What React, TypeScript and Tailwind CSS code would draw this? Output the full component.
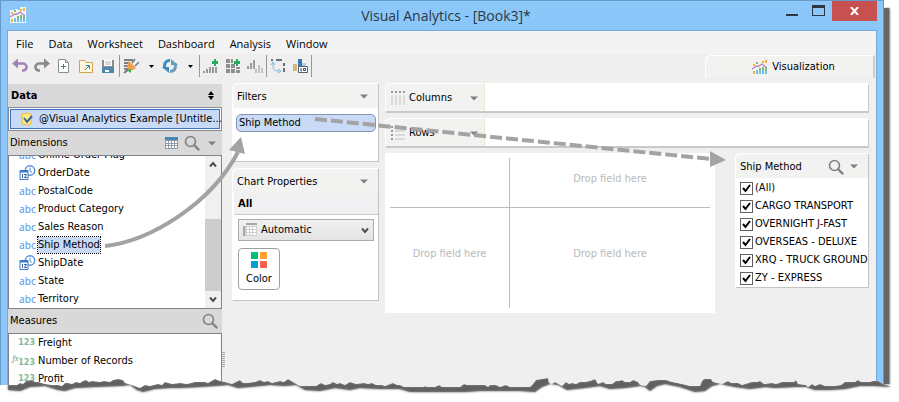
import type { ReactNode } from "react";

const MENUS = ["File", "Data", "Worksheet", "Dashboard", "Analysis", "Window"];

const DIMENSIONS = [
  { label: "Online Order Flag", type: "text" },
  { label: "OrderDate", type: "date" },
  { label: "PostalCode", type: "text" },
  { label: "Product Category", type: "text" },
  { label: "Sales Reason", type: "text" },
  { label: "Ship Method", type: "text", selected: true },
  { label: "ShipDate", type: "date" },
  { label: "State", type: "text" },
  { label: "Territory", type: "text" },
];

const MEASURES = [
  { label: "Freight", calculated: false },
  { label: "Number of Records", calculated: true },
  { label: "Profit", calculated: false },
];

const SHIP_METHODS = [
  "(All)",
  "CARGO TRANSPORT",
  "OVERNIGHT J-FAST",
  "OVERSEAS - DELUXE",
  "XRQ - TRUCK GROUND",
  "ZY - EXPRESS",
];

// Jagged upper edge and smoother lower edge of the torn strip
const TEAR_TOP =
  "0,385 8,385 17,385 20,383 23,384 26,381 32,380 35,382 38,382 45,384 52,385 58,385 62,386 65,383 68,383 72,384 76,382 80,383 83,381 86,380 89,382 92,381 100,382 104,381 110,382 113,380 118,379 123,380 125,383 132,385 140,388 145,385 150,386 158,384 162,385 165,382 172,384 180,383 187,384 195,382 205,382 208,383 215,379 220,381 225,382 232,384 236,382 240,380 243,383 247,383 255,382 260,380 264,382 268,381 272,383 280,381 284,382 288,379 293,382 298,385 300,386 310,386 316,386 321,383 325,385 330,384 333,382 337,384 340,383 345,385 350,382 353,383 356,384 364,383 368,384 372,383 376,385 382,385 385,386 393,383 397,385 400,385 404,387 424,387 425,386 427,387 435,387 439,385 442,387 460,387 464,384 467,385 485,385 488,387 490,385 496,385 500,387 506,385 510,387 530,387 533,384 536,380 542,379 548,378 549,383 552,384 555,382 562,386 566,382 569,384 572,383 576,384 580,382 585,382 590,381 595,379 598,384 603,382 606,384 612,384 616,381 619,381 622,380 625,382 630,382 633,380 638,382 640,385 646,386 650,381 658,380 666,380 672,382 682,384 690,386 700,386 702,381 704,379 711,379 713,382 722,384 728,381 731,383 738,383 742,385 752,382 757,382 760,381 764,384 772,383 776,384 782,382 794,382 796,380 798,384 806,385 808,387 812,384 815,386 820,384 825,386 835,386 841,385 845,382 855,382 858,380 861,382 870,382 873,381 878,381 883,384 899,385".split(
    " ",
  );
const TEAR_BOTTOM =
  "891,387 875,386 860,386 845,389 830,390 815,390 806,387 795,387 775,388 765,387 750,389 735,387 720,384 712,386 705,391 695,392 680,387 665,384 657,386 650,391 645,387 640,386 625,388 610,389 600,386 585,388 567,390 558,385 550,384 542,387 535,392 520,391 500,391 480,391 465,392 435,392 410,392 400,389 380,389 360,388 350,390 335,388 320,391 305,390 296,385 285,386 270,385 250,387 238,388 228,385 215,386 200,387 180,388 170,388 155,389 143,392 137,390 130,385 120,386 95,387 75,388 65,391 58,390 45,386 30,387 20,391 8,390";

function ChartIcon({ className, halo }: { className?: string; halo?: boolean }) {
  return (
    <svg viewBox="0 0 16 16" className={className} aria-hidden="true">
      {halo && <path d="M0 3h5V2h3v1h2V0h6v16H0z" fill="#fff" opacity=".85" />}
      <path d="M1 5h2v2H1zM10 2h2v2h-2zM13 1h2v3h-2zM1 12h2v3H1z" fill="#fbb034" />
      <path d="M4 3h2v2H4zM7 9h2v3H7zM10 8h2v3h-2zM13 9h2v3h-2z" fill="#7dbb7d" />
      <path d="M4 11h2v4H4zM7 12h2v3H7zM10 11h2v4h-2zM13 12h2v3h-2z" fill="#6cc0ec" />
      <path d="M0 10 4 7.5 7 7l3-2 5 4" fill="none" stroke="#b982b6" strokeWidth="1.4" />
    </svg>
  );
}

function SearchIcon() {
  return (
    <svg viewBox="0 0 16 16" className="h-4 w-4" fill="none" stroke="#818181" aria-hidden="true">
      <circle cx="6.5" cy="6.5" r="5" strokeWidth="1.6" />
      <path d="m10.5 10.5 4 4" strokeWidth="2.4" strokeLinecap="round" />
    </svg>
  );
}

function Caret() {
  return (
    <svg viewBox="0 0 8 5" className="h-[5px] w-2 fill-[#808080]" aria-hidden="true">
      <path d="M0 .5h8L4 4.5z" />
    </svg>
  );
}

function CaretButton({ label }: { label: string }) {
  return (
    <button type="button" aria-label={label} className="flex h-4 w-3 items-center justify-center">
      <Caret />
    </button>
  );
}

function Chevron({ up }: { up?: boolean }) {
  return (
    <svg viewBox="0 0 8 7" className="h-[7px] w-2" fill="none" stroke="#505050" strokeWidth="2" aria-hidden="true">
      <path d={up ? "M1 5.5 4 2l3 3.5" : "M1 1.5 4 5l3-3.5"} />
    </svg>
  );
}

function ToolButton({ label, children }: { label: string; children: ReactNode }) {
  return (
    <button type="button" aria-label={label} className="flex h-4 w-4 items-center justify-center">
      <svg viewBox="0 0 16 16" className="h-4 w-4" fill="none" aria-hidden="true">
        {children}
      </svg>
    </button>
  );
}

function ToolMenu({ label }: { label: string }) {
  return (
    <button type="button" aria-label={label} className="ml-[6px] flex h-4 w-3 items-center justify-center">
      <svg viewBox="0 0 5 3" className="h-[3px] w-[5px]" aria-hidden="true">
        <path d="M0 0h5L2.5 3z" />
      </svg>
    </button>
  );
}

function Separator() {
  return <div className="mx-[3px] h-[22px] w-px bg-[#989898]" />;
}

const PLUS = "M9 3h2V1h2v2h2v3h-2v2h-2V6H9z";

function Toolbar() {
  return (
    <div className="flex h-6 items-center pl-1">
      <div className="flex items-center gap-[6px]">
        <ToolButton label="Undo">
          <path d="M4 5.5h6.500a3.500 3.500 0 0 1 1 7H10" stroke="#a583b8" strokeWidth="2.6" />
          <path d="M0 5.5 6 .5v10z" fill="#a583b8" />
        </ToolButton>
        <ToolButton label="Redo">
          <path d="M12 5.5H5.500a3.500 3.500 0 0 0-1 7H6" stroke="#8a8a8a" strokeWidth="2.6" />
          <path d="m16 5.5-6-5v10z" fill="#8a8a8a" />
        </ToolButton>
        <ToolButton label="New workbook">
          <path d="M2.5 1.5h7l3 3v10h-10z" fill="#fff" stroke="#8e8e8e" />
          <path d="M9.500 1.500v3h3" stroke="#8e8e8e" />
          <path d="M7.500 6v5M5 8.500h5" stroke="#2c9a4b" />
        </ToolButton>
        <ToolButton label="Open workbook">
          <path d="M1.500 2.500h5l1.500 2h6.500v10h-13z" fill="#fff8dc" stroke="#cfa24c" />
          <path d="m7 12 4-4M8 7.500h3.500V11" stroke="#337ba8" />
        </ToolButton>
        <ToolButton label="Save">
          <path d="M2 8h12v7H2z" fill="#4f87ad" />
          <path d="M2 2h12v7H2z" fill="#8c8c8c" />
          <path d="M4 2h8v6H4zM5 12h6v2H5z" fill="#fff" />
          <path d="M5 4h6M5 6h6" stroke="#b0b0b0" />
          <path d="M9 12h2v2H9z" fill="#4f87ad" />
        </ToolButton>
      </div>
      <Separator />
      <ToolButton label="Connect to data">
        <path d="M1 2h9M1 5h6M1 8h4M1 11h4" stroke="#808080" strokeWidth="2" />
        <path d="m1 15 5-4" stroke="#777" strokeWidth="2" />
        <path d="m6 3 7 7-3 2H5l-1-4z" fill="#ef9e4e" />
        <path d="m9 5 3-4M12 8l4-4" stroke="#777" strokeWidth="1.500" />
        <path d="m4 12 4-1v4z" fill="#2bb24c" />
      </ToolButton>
      <ToolMenu label="Data connections" />
      <div className="w-[5px]" />
      <ToolButton label="Refresh">
        <path d="M8 2.500C4 2 1.500 6 3 10.500" stroke="#3e8dbd" strokeWidth="3" />
        <path d="M8 13.500c4 .5 6.500-3.500 5-8" stroke="#6b9dbd" strokeWidth="3" />
        <path d="M0 9h7v6z" fill="#3e8dbd" />
        <path d="M16 7H9V1z" fill="#6b9dbd" />
      </ToolButton>
      <ToolMenu label="Refresh options" />
      <Separator />
      <div className="flex items-center gap-[6px]">
        <ToolButton label="New worksheet">
          <path d="M1 13v2M4 11v4M7 9v6M10 9v6M13 9v6" stroke="#999" strokeWidth="2" />
          <path d={PLUS} fill="#25ad5c" />
        </ToolButton>
        <ToolButton label="New dashboard">
          <path d="M1 1h4v4H1zM6 1h2v4H6zM1 6h4v4H1zM6 6h4v4H6zM11 9h4v2h-4zM1 11h4v4H1zM6 11h4v4H6zM11 12h4v3h-4z" fill="#8f8f8f" />
          <path d={PLUS} fill="#25ad5c" />
        </ToolButton>
        <ToolButton label="Duplicate sheet">
          <path d="M1 8v3M4 5v6M7 2v9" stroke="#9d9d9d" strokeWidth="2" />
          <path d="M9 11v4M12 7v8M15 10v5" stroke="#c2c2c2" strokeWidth="2" />
        </ToolButton>
      </div>
      <Separator />
      <div className="flex items-center gap-[6px]">
        <ToolButton label="Swap rows and columns">
          <path d="M1 2h2M6 2h6M14 5v3M14 10v4" stroke="#707070" strokeWidth="2" />
          <path d="M3 5v3c0 3 1 5 6 5M1 7l2-3 2 3M8 11l3 2-3 2" stroke="#77b7df" />
        </ToolButton>
        <ToolButton label="Show labels">
          <path d="M1 6h4v7H1z" fill="#d6b47d" />
          <path d="M6 1h4v9H6z" fill="#3b77b4" />
          <path d="M10 5h4v4h-4z" fill="#b9cbe0" />
          <path d="M6.500 8.500h9v6h-9z" fill="#fff" stroke="#555f70" />
          <path d="M9 10v3h1M11.500 10.500h2v2h-2z" stroke="#2f4c74" />
        </ToolButton>
      </div>
      <Separator />
      <a
        href="#visualization"
        className="mr-px ml-auto flex h-[23px] w-[170px] items-center justify-center gap-1 self-end rounded-tl-md border-t border-r-2 border-l border-white border-r-[#cfcfcf] bg-[#f2f2f0] pl-2"
      >
        <ChartIcon className="h-4 w-4" />
        Visualization
      </a>
    </div>
  );
}

function TypeIcon({ type }: { type: string }) {
  if (type === "date") {
    return (
      <svg viewBox="0 0 17 16" className="h-4 w-[17px]" fill="none" aria-hidden="true">
        <circle cx="11" cy="5.500" r="4.700" fill="#fff" stroke="#5590dc" strokeWidth="1.500" />
        <path d="M11 2.500V6l2 1.500" stroke="#5590dc" />
        <path d="M1 5.500h8v9H1z" fill="#fff" stroke="#3a78cb" />
        <path d="M1 6.500h8" stroke="#3a78cb" strokeWidth="2" />
        <path d="M3.500 9v4M5 9.500h2.500L5.500 12.500h2.500" stroke="#3a5f9c" />
      </svg>
    );
  }
  return <span className="w-[17px] font-['Noto_Sans'] text-[10px] font-medium text-[#6ea4ea]">abc</span>;
}

function PanelHeading({ title, children }: { title: string; children?: ReactNode }) {
  return (
    <div className="flex h-6 items-center bg-[#d9d9d9] pr-1 pl-[2px]">
      <h2>{title}</h2>
      <div className="ml-auto flex items-center gap-[6px]">{children}</div>
    </div>
  );
}

function DataPane() {
  return (
    <aside className="mt-px w-[214px] shrink-0">
      <div className="flex h-[23px] items-center bg-[#d9d9d9] pr-2 pl-[3px]">
        <h2 className="font-bold">Data</h2>
        <button type="button" aria-label="Switch data source" className="ml-auto">
          <svg viewBox="0 0 6 9" className="h-[9px] w-[6px]" aria-hidden="true">
            <path d="M0 4h6L3 0zM0 5h6L3 9z" />
          </svg>
        </button>
      </div>
      <div className="border border-[#8a8a96] bg-white p-px">
        <button type="button" className="flex h-5 w-full items-center gap-[6px] border border-[#3b72c4] bg-[#c8daf5] pl-[10px] whitespace-nowrap">
          <svg viewBox="0 0 12 14" className="h-[14px] w-3 shrink-0" aria-hidden="true">
            <path d="M1 2q5-2 9 0v10q-4 2-9 0z" fill="#ffe88a" stroke="#e3bd3d" />
            <path d="m3 6 3 4 5-6" fill="none" stroke="#31679b" strokeWidth="2" />
          </svg>
          @Visual Analytics Example [Untitle...
        </button>
      </div>
      <PanelHeading title="Dimensions">
        <button type="button" aria-label="View data">
          <svg viewBox="0 0 13 12" className="h-3 w-[13px]" aria-hidden="true">
            <path d="M0 0h13v12H0z" fill="#8e9ba5" />
            <path d="M0 0h13v3H0z" fill="#4388bd" />
            <path d="M1 4h2v2H1zM4 4h2v2H4zM7 4h2v2H7zM10 4h2v2h-2zM1 7h2v1H1zM4 7h2v1H4zM7 7h2v1H7zM10 7h2v1h-2zM1 9h2v2H1zM4 9h2v2H4zM7 9h2v2H7zM10 9h2v2h-2z" fill="#fff" />
          </svg>
        </button>
        <button type="button" aria-label="Find dimension">
          <SearchIcon />
        </button>
        <CaretButton label="Dimension options" />
      </PanelHeading>
      <div className="flex justify-between overflow-hidden border border-[#82828f] bg-white">
        <ul className="-mt-[10px]">
          {DIMENSIONS.map((d) => (
            <li key={d.label} className="flex h-[18px] items-center gap-[2px] pl-[10px]">
              <TypeIcon type={d.type} />
              <span className={d.selected ? "bg-[#c8daf5] leading-4 outline-1 outline-black outline-dotted" : ""}>{d.label}</span>
            </li>
          ))}
        </ul>
        <div className="flex w-4 flex-col items-center bg-[#f0f0f0]">
          <div className="flex h-4 items-center">
            <Chevron up />
          </div>
          <div className="mt-auto h-[72px] w-full bg-[#cdcdcd]" />
          <div className="flex h-[17px] items-center">
            <Chevron />
          </div>
        </div>
      </div>
      <PanelHeading title="Measures">
        <button type="button" aria-label="Find measure">
          <SearchIcon />
        </button>
      </PanelHeading>
      <ul className="border border-b-0 border-[#82828f] bg-white pb-[14px]">
        {MEASURES.map((m) => (
          <li key={m.label} className="flex h-[18px] items-center gap-[3px]">
            <span className="w-[26px] text-right font-['DejaVu_Sans'] text-[8px] font-bold whitespace-nowrap text-[#84b79b]">
              {m.calculated && <i className="align-super font-serif text-[7px]">fx</i>}
              123
            </span>
            <span>{m.label}</span>
          </li>
        ))}
      </ul>
    </aside>
  );
}

function CardHeading({ title, children }: { title: string; children: ReactNode }) {
  return (
    <div className="flex h-[25px] items-center rounded-tl-md border-t border-l border-white bg-[#f2f2f0] pt-px pr-2 pl-1">
      <h2 className="whitespace-nowrap">{title}</h2>
      <div className="ml-auto flex items-center gap-1">{children}</div>
    </div>
  );
}

function Shelf({ title, rows }: { title: string; rows?: boolean }) {
  return (
    <div className="flex h-7 rounded-tl-md bg-white shadow-[1px_2px_0_#c9c9c9]">
      <div className="flex w-[100px] items-center rounded-tl-md border-t border-r border-l border-white border-r-[#ece6cd] bg-[#f2f2f0] pt-px pr-1 pl-[5px]">
        <svg viewBox="0 0 14 14" className="mr-1 h-[14px] w-[14px]" aria-hidden="true">
          {rows ? (
            <>
              <path d="M0 0h2v2H0zM0 4h2v2H0zM0 8h2v2H0zM0 12h2v2H0z" fill="#999" />
              <path d="M4 0h10v2H4zM4 4h10v2H4zM4 8h10v2H4zM4 12h10v2H4z" fill="#dadada" />
            </>
          ) : (
            <>
              <path d="M0 0h2v2H0zM4 0h2v2H4zM8 0h2v2H8zM12 0h2v2h-2z" fill="#999" />
              <path d="M0 4h2v10H0zM4 4h2v10H4zM8 4h2v10H8zM12 4h2v10h-2z" fill="#dadada" />
            </>
          )}
        </svg>
        <h2>{title}</h2>
        <div className="ml-auto">
          <CaretButton label={`${title} options`} />
        </div>
      </div>
    </div>
  );
}

function PropertyCards() {
  return (
    <div className="flex w-[146px] shrink-0 flex-col gap-[7px]">
      <section className="h-[78px] rounded-tl-md bg-white shadow-[1px_1px_0_#c4c4c4]">
        <CardHeading title="Filters">
          <CaretButton label="Filter options" />
        </CardHeading>
        <div className="pt-[6px] pr-[2px] pl-1">
          <button type="button" className="block h-[18px] w-full rounded-[5px] border border-[#8296b4] bg-[#c8daf5] px-[2px] text-left leading-4">
            Ship Method
          </button>
        </div>
      </section>
      <section className="rounded-tl-md bg-white pb-[10px] shadow-[1px_1px_0_#c4c4c4]">
        <CardHeading title="Chart Properties">
          <CaretButton label="Chart property options" />
        </CardHeading>
        <h3 className="ml-[2px] flex h-[22px] items-center border-b border-[#c9c9c9] bg-[#f0f0f2] pl-1 font-bold">All</h3>
        <div className="relative mt-1 mr-1 ml-[6px]">
          <select
            aria-label="Chart type"
            className="h-[22px] w-full appearance-none border border-[#acacac] bg-linear-to-b from-[#f0f0f0] to-[#e4e4e4] pl-[22px]"
          >
            <option>Automatic</option>
          </select>
          <svg viewBox="0 0 14 13" className="pointer-events-none absolute top-1 left-[5px] h-[13px] w-[14px]" aria-hidden="true">
            <path d="M0 3h14v10H0z" fill="#cfcfcf" />
            <path d="M3 0h11v2H3zM0 3h2v10H0z" fill="#a8a8a8" />
            <path d="M4 4h2v2H4zM7 4h2v2H7zM10 4h3v2h-3zM4 7h2v2H4zM7 7h2v2H7zM10 7h3v2h-3zM4 10h2v2H4zM7 10h2v2H7zM10 10h3v2h-3z" fill="#fff" />
          </svg>
          <div className="pointer-events-none absolute top-2 right-[5px]">
            <Chevron />
          </div>
        </div>
        <button type="button" className="mt-[7px] ml-[6px] flex h-[42px] w-[42px] flex-col items-center justify-between rounded border border-[#a0a0a0] bg-white pt-[3px] pb-[2px]">
          <svg viewBox="0 0 16 16" className="h-4 w-4" aria-hidden="true">
            <path d="M0 0h7v7H0z" fill="#00c073" />
            <path d="M9 0h7v7H9z" fill="#ff9f2f" />
            <path d="M0 9h7v7H0z" fill="#00a0d2" />
            <path d="M9 9h7v7H9z" fill="#f3604f" />
          </svg>
          Color
        </button>
      </section>
    </div>
  );
}

function DropCanvas() {
  return (
    <div className="min-w-0 flex-1 bg-white p-[5px] text-[#b9b9b9]">
      <div className="grid h-[150px] grid-cols-[119px_1fr] grid-rows-[50px_1fr]">
        <div className="border-b border-[#bdbdbd]" />
        <div className="flex items-center justify-center border-b border-l border-[#bdbdbd] pb-2">Drop field here</div>
        <div className="flex items-center justify-center pb-2">Drop field here</div>
        <div className="flex items-center justify-center border-l border-[#bdbdbd] pb-2">Drop field here</div>
      </div>
    </div>
  );
}

function ShipMethodFilter() {
  return (
    <section className="w-[133px] shrink-0 self-start rounded-tl-md bg-white shadow-[1px_1px_0_#c4c4c4]">
      <CardHeading title="Ship Method">
        <button type="button" aria-label="Find value">
          <SearchIcon />
        </button>
        <CaretButton label="Quick filter options" />
      </CardHeading>
      <div className="pt-px pl-[5px]">
        {SHIP_METHODS.map((name) => (
          <label key={name} className="relative flex h-[18px] items-center gap-[2px] whitespace-nowrap">
            <input type="checkbox" defaultChecked className="peer h-[13px] w-[13px] shrink-0 appearance-none border border-[#606060] bg-white" />
            <svg viewBox="0 0 9 9" className="pointer-events-none absolute left-[2px] hidden h-[9px] w-[9px] peer-checked:block" fill="none" aria-hidden="true">
              <path d="m1 4 2.500 3L8 1" stroke="#000" strokeWidth="2" />
            </svg>
            {name}
          </label>
        ))}
      </div>
    </section>
  );
}

function DragArrows() {
  return (
    <svg className="pointer-events-none absolute top-0 left-0 h-[402px] w-[899px]" viewBox="0 0 899 402" fill="none" aria-hidden="true">
      <g stroke="#a3a3a3" strokeWidth="4">
        <path d="M105 246C150 241 211 204 238 152" />
        <path d="m315 119 396 40" strokeDasharray="12 4" />
      </g>
      <path d="m241 137 4 17-16-4zM710 151l16 9-16 7z" fill="#a3a3a3" />
    </svg>
  );
}

function TornEdge() {
  const below = `${TEAR_TOP.join(" ")} 899,402 0,402`;
  const strip = `${TEAR_TOP.slice(1, -1).join(" ")} ${TEAR_BOTTOM}`;
  return (
    <svg
      className="pointer-events-none absolute bottom-0 left-0 h-6 w-full"
      viewBox="0 378 899 24"
      preserveAspectRatio="none"
      aria-hidden="true"
    >
      <clipPath id="tear">
        <polygon points={below} />
      </clipPath>
      <filter id="soft" x="-2%" y="-50%" width="104%" height="200%">
        <feGaussianBlur stdDeviation="1.200" />
      </filter>
      <polygon points={below} fill="#fff" />
      <g clipPath="url(#tear)" fill="#606060">
        <polygon points={strip} filter="url(#soft)" />
        <polygon points={strip} opacity=".7" />
      </g>
    </svg>
  );
}

export default function App() {
  return (
    <div className="relative overflow-hidden bg-white pr-[15px] font-['DejaVu_Sans_Condensed','DejaVu_Sans',sans-serif] text-[11px] leading-4 text-black">
      <div className="relative border border-b-0 border-[#6798c8] bg-[#8cc7fa] px-[6px]">
        <div className="absolute top-[7px] -right-[6px] bottom-4 w-[5px] bg-[#666] shadow-[1px_0_2px_#777]" />
        <header className="relative flex h-[29px] items-start">
          <ChartIcon className="mt-[6px] ml-[3px] h-4 w-4" halo />
          <h1 className="flex-1 pl-20 text-center font-['Open_Sans','Noto_Sans',sans-serif] text-sm leading-[29px] text-[#2d3742]">
            Visual Analytics - [Book3]*
          </h1>
          <button type="button" aria-label="Minimize" className="mt-[13px] h-[2px] w-3 bg-[#2d3742]" />
          <button type="button" aria-label="Maximize" className="mt-1 ml-[14px] h-[11px] w-[13px] border border-t-[3px] border-[#2d3742]" />
          <button type="button" aria-label="Close" className="ml-[7px] flex h-5 w-[45px] items-center justify-center bg-[#c75050]">
            <svg viewBox="0 0 9 8" className="h-2 w-[9px]" stroke="#fff" strokeWidth="2" aria-hidden="true">
              <path d="m1 0 7 8M8 0 1 8" />
            </svg>
          </button>
        </header>
        <main className="relative border border-b-0 border-[#77a9dc] bg-[#efefef]">
          <nav className="flex h-[23px] items-center gap-[15px] bg-[#f3f3f3] px-2 pt-[3px] font-['Open_Sans','Noto_Sans',sans-serif]">
            {MENUS.map((m) => (
              <button key={m} type="button">
                {m}
              </button>
            ))}
          </nav>
          <Toolbar />
          <div className="flex pt-[5px]">
            <DataPane />
            <div className="flex w-[10px] shrink-0 flex-col justify-end pb-[34px]">
              <div className="h-4 w-[3px] bg-[repeating-linear-gradient(#aaa_0_1px,transparent_1px_2px)]" />
            </div>
            <PropertyCards />
            <div className="mr-2 ml-[7px] flex min-w-0 flex-1 flex-col gap-[7px]">
              <Shelf title="Columns" />
              <Shelf title="Rows" rows />
              <div className="flex gap-5">
                <DropCanvas />
                <ShipMethodFilter />
              </div>
            </div>
          </div>
        </main>
      </div>
      <DragArrows />
      <TornEdge />
    </div>
  );
}
